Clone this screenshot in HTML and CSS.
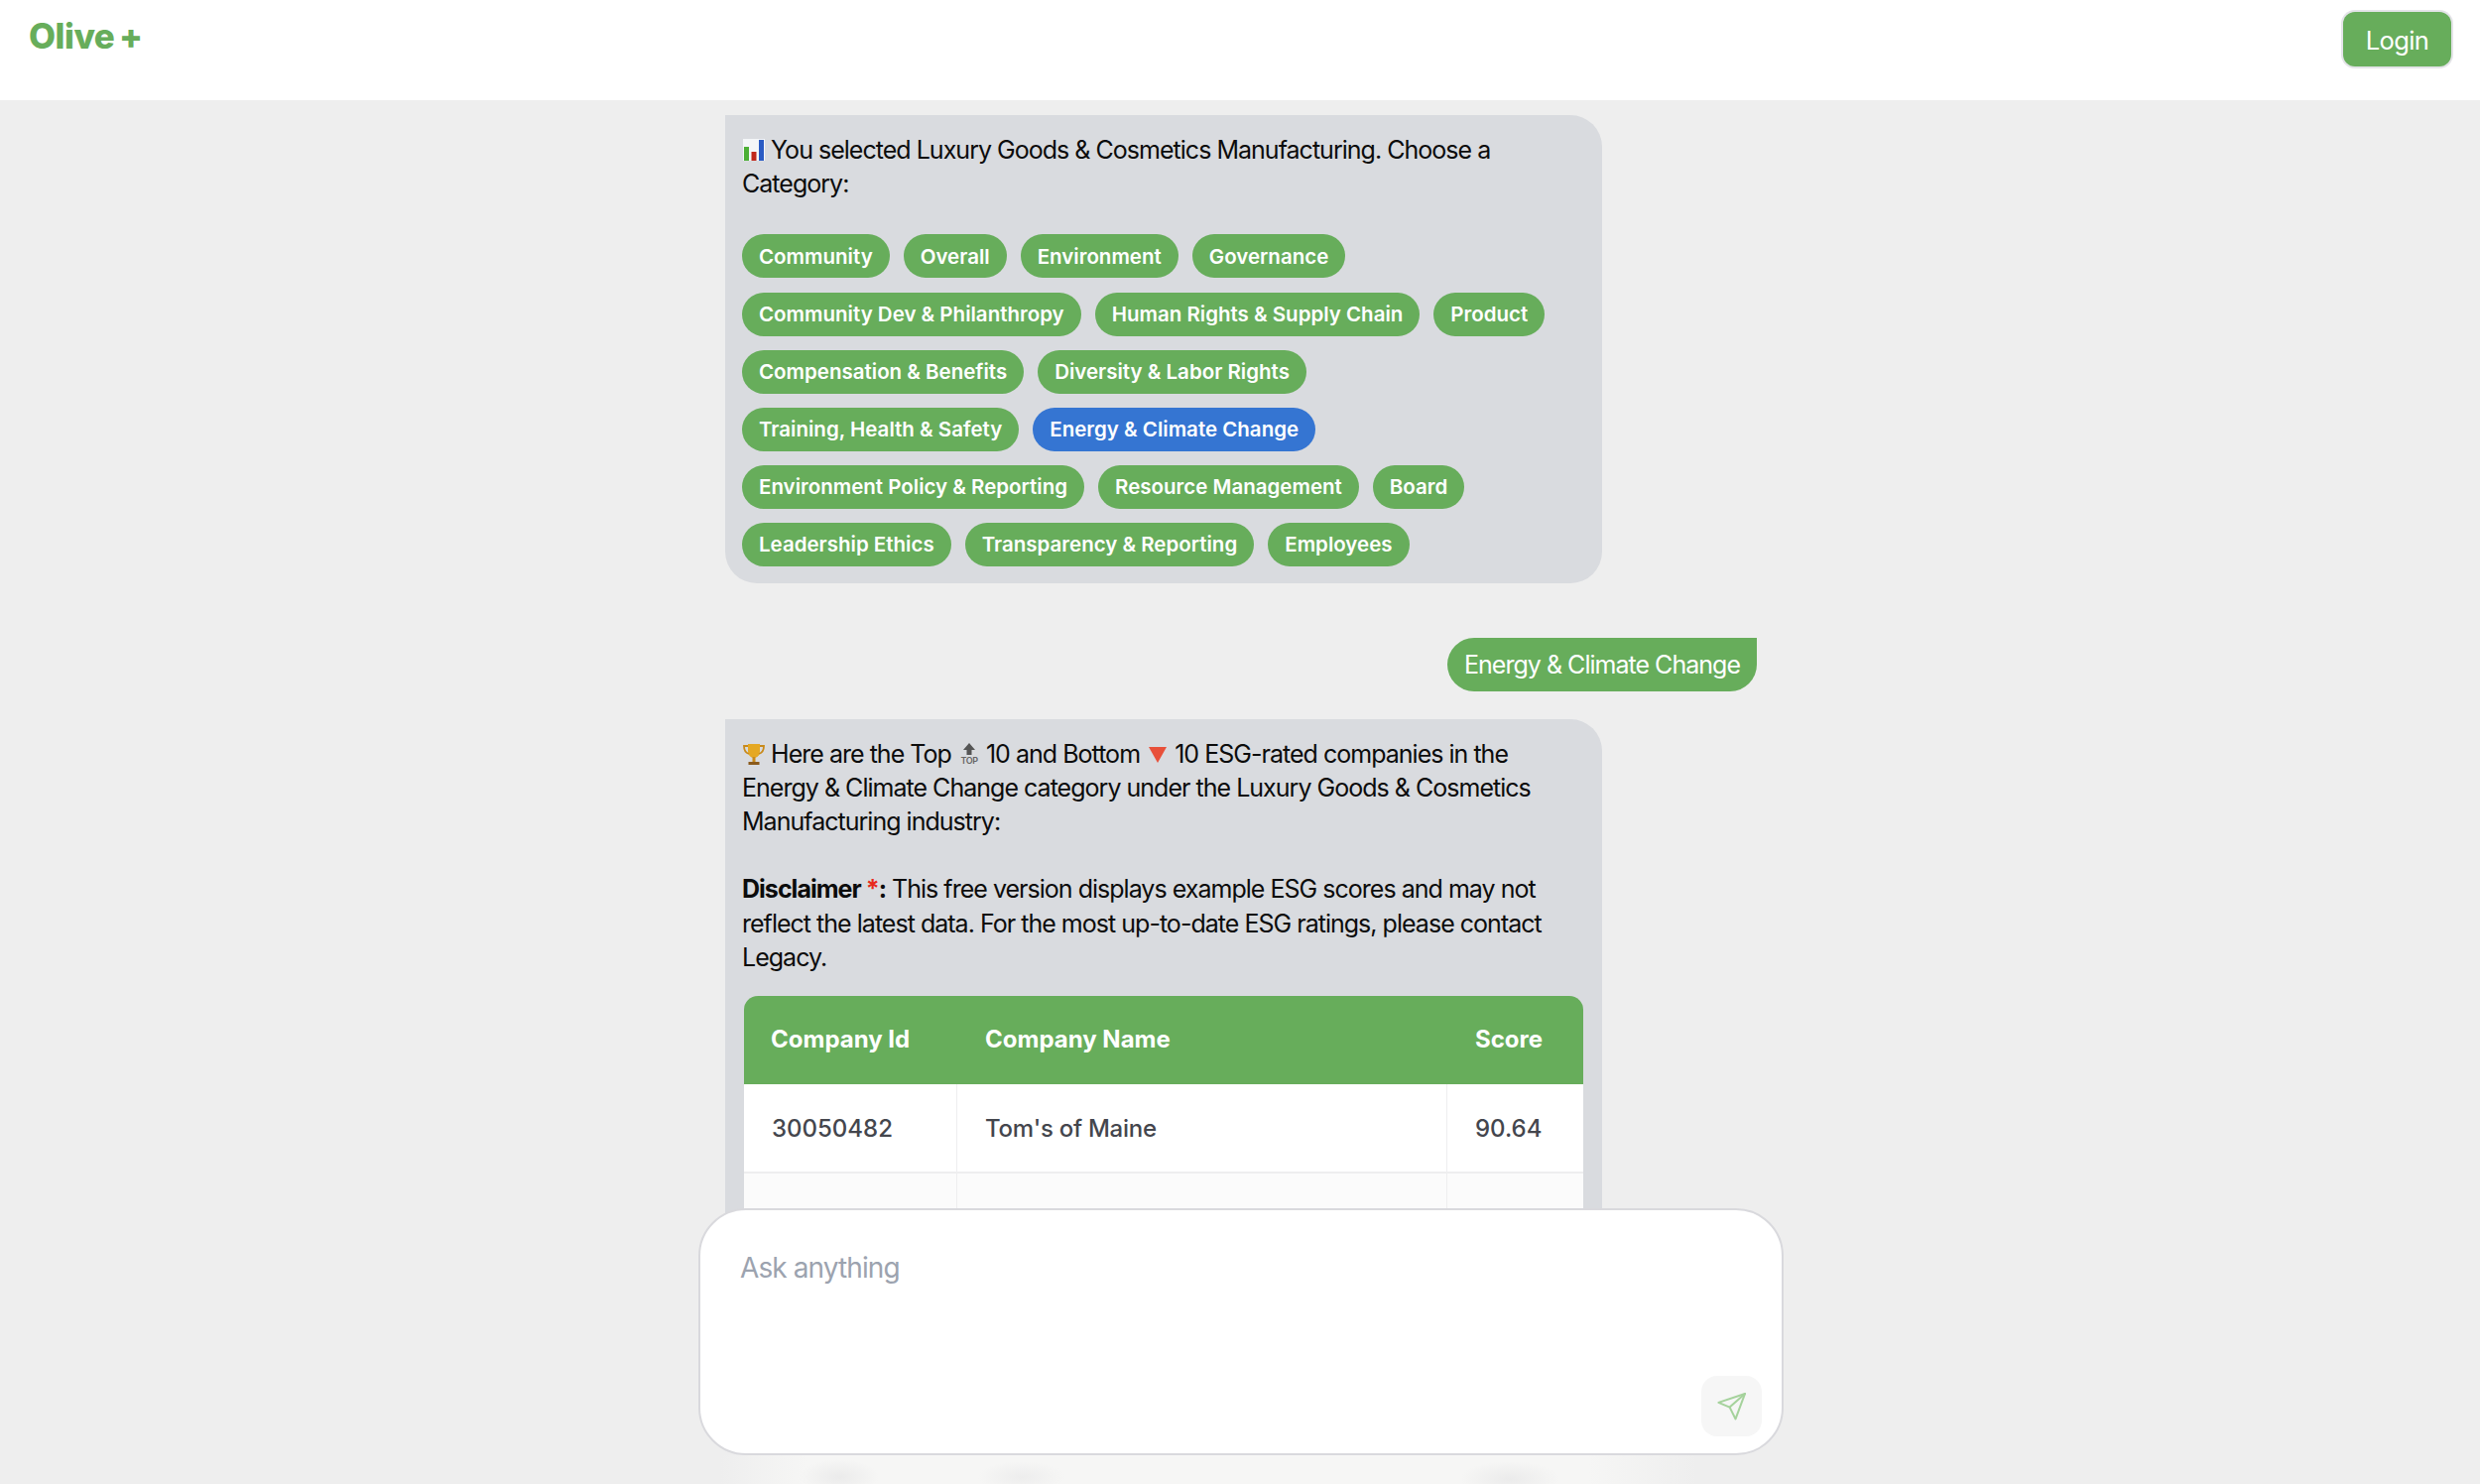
FILE: index.html
```html
<!DOCTYPE html>
<html lang="en">
<head>
  <meta charset="UTF-8">
  <title>Olive +</title>
  <link rel="stylesheet" href="styles.css">
</head>
<body>
  <!-- Top bar -->
  <header class="topbar">
    <div class="logo">Olive +</div>
    <button class="login-btn">Login</button>
  </header>

  <main class="chat-area">
    <div class="chat-column">
      <!-- Category picker -->
      <div class="bubble bot">
        <p class="bubble-text">
          <svg class="emoji" viewBox="0 0 24 24"><rect x="1" y="1" width="22" height="22" fill="#f4f6f8"/><rect x="2" y="9" width="5" height="14" fill="#4caf35"/><rect x="9.500" y="14" width="5" height="9" fill="#c0281c"/><rect x="17" y="2" width="5" height="21" fill="#2a5bc4"/></svg>
          You selected Luxury Goods &amp; Cosmetics Manufacturing. Choose a Category:
        </p>
        <div class="pills">
          <button class="pill">Community</button>
          <button class="pill">Overall</button>
          <button class="pill">Environment</button>
          <button class="pill">Governance</button>
          <button class="pill">Community Dev &amp; Philanthropy</button>
          <button class="pill">Human Rights &amp; Supply Chain</button>
          <button class="pill">Product</button>
          <button class="pill">Compensation &amp; Benefits</button>
          <button class="pill">Diversity &amp; Labor Rights</button>
          <button class="pill">Training, Health &amp; Safety</button>
          <button class="pill active">Energy &amp; Climate Change</button>
          <button class="pill">Environment Policy &amp; Reporting</button>
          <button class="pill">Resource Management</button>
          <button class="pill">Board</button>
          <button class="pill">Leadership Ethics</button>
          <button class="pill">Transparency &amp; Reporting</button>
          <button class="pill">Employees</button>
        </div>
      </div>

      <div class="bubble user">Energy &amp; Climate Change</div>

      <!-- Results -->
      <div class="bubble bot">
        <p class="bubble-text">
          <svg class="emoji" viewBox="0 0 24 24"><path d="M6 2h12v7c0 4-2.500 7-6 7s-6-3-6-7z" fill="#e5a823"/><path d="M6 4H2c0 5 2 7 5 8M18 4h4c0 5-2 7-5 8" fill="none" stroke="#c98a1a" stroke-width="1.800"/><rect x="10.500" y="15" width="3" height="5" fill="#c98a1a"/><rect x="6.500" y="20" width="11" height="3" fill="#8a5a1c"/></svg>
          Here are the Top
          <svg class="emoji" viewBox="0 0 24 24"><path d="M12 1l6 7h-3.500v5h-5V8H6z" fill="#555"/><text x="12" y="22" text-anchor="middle" class="emoji-top">TOP</text></svg>
          10 and Bottom
          <svg class="emoji" viewBox="0 0 24 24"><path d="M3 5h18L12 21z" fill="#e8503a"/></svg>
          10 ESG-rated companies in the Energy &amp; Climate Change category under the Luxury Goods &amp; Cosmetics Manufacturing industry:
        </p>
        <p class="bubble-text disclaimer">
          <strong>Disclaimer <span class="star">*</span>:</strong> This free version displays example ESG scores and may not reflect the latest data. For the most up-to-date ESG ratings, please contact Legacy.
        </p>
        <table class="score-table">
          <thead>
            <tr><th class="col-id">Company Id</th><th>Company Name</th><th class="col-score">Score</th></tr>
          </thead>
          <tbody>
            <tr><td>30050482</td><td class="name-cell">Tom's of Maine</td><td>90.64</td></tr>
            <tr class="alt"><td></td><td></td><td></td></tr>
          </tbody>
        </table>
      </div>
    </div>

    <!-- Composer floats over the chat -->
    <div class="composer-wrap">
      <div class="composer">
        <div class="placeholder">Ask anything</div>
        <button class="send-btn">
          <svg viewBox="-1.500 -1.500 27 27" width="32" height="32" fill="none" stroke="#a5d29c" stroke-width="1.700" stroke-linejoin="round" stroke-linecap="round"><path d="M23 1 .5 8.500 10 12.500 15 22.500z"/><path d="M23 1 10 12.500"/></svg>
        </button>
      </div>
      <div class="composer-fade"></div>
    </div>
  </main>
</body>
</html>
```

FILE: styles.css
```css
* {
  box-sizing: border-box;
}

html, body {
  margin: 0;
  height: 100%;
}

body {
  display: flex;
  flex-direction: column;
  overflow: hidden;
  background: #eeeeee;
  font-family: "Inter", "Noto Sans", sans-serif;
  color: #0c0c0c;
}

button {
  font-family: inherit;
  border: none;
}

.topbar {
  height: 101px;
  flex: none;
  display: flex;
  justify-content: space-between;
  align-items: flex-start;
  padding: 12px 29px;
  background: #fff;
}

.logo {
  font-size: 35px;
  font-weight: 800;
  line-height: 48px;
  letter-spacing: -0.5px;
  word-spacing: -2.5px;
  color: #67ad5b;
}

.login-btn {
  width: 109px;
  height: 55px;
  padding-top: 3px;
  background: #67ad5b;
  color: #fff;
  font-size: 25.5px;
  letter-spacing: -0.6px;
  border-radius: 12px;
  box-shadow: 0 0 0 2px #e4e4e8;
}

.chat-area {
  flex: 1;
  position: relative;
  overflow: hidden;
}

.chat-column {
  width: 1040px;
  margin-left: 731px;
  padding-top: 15px;
  display: flex;
  flex-direction: column;
  align-items: flex-start;
}

.bubble {
  font-size: 25px;
  line-height: 34.2px;
  letter-spacing: -0.98px;
}

.bot {
  width: 884px;
  padding: 18px 17px 17px;
  background: #d9dbdf;
  border-radius: 0 32px 32px 32px;
}

.user {
  align-self: flex-end;
  margin: 55px 0 28px;
  padding: 10px 17px;
  height: 54px;
  background: #67ad5b;
  color: #fff;
  border-radius: 32px 0 32px 32px;
}

.bubble-text {
  margin: 0;
}

.disclaimer {
  margin-top: 34px;
}

.star {
  color: #e8291c;
}

.emoji {
  width: 24px;
  height: 24px;
  margin-right: -1px;
  vertical-align: -3px;
}

.emoji-top {
  font-size: 9px;
  font-weight: 600;
  letter-spacing: -0.4px;
  fill: #666;
}

.pills {
  display: flex;
  flex-wrap: wrap;
  gap: 14.1px 14px;
  margin-top: 34px;
}

.pill {
  height: 44px;
  padding: 0 17px;
  background: #67ad5b;
  color: #fff;
  font-size: 20.5px;
  font-weight: 600;
  letter-spacing: 0;
  border-radius: 22px;
}

.pill.active {
  background: #3575d2;
}

.score-table {
  width: 846px;
  margin: 22px 0 0 2px;
  border-collapse: separate;
  border-spacing: 0;
  table-layout: fixed;
  letter-spacing: 0;
  font-size: 24px;
}

.score-table th {
  height: 89px;
  padding: 0 27px 0 28px;
  text-align: left;
  font-weight: 700;
  color: #fff;
  background: #67ad5b;
}

.score-table th:first-child {
  padding-left: 27px;
  border-top-left-radius: 14px;
}

.score-table th:last-child {
  border-top-right-radius: 14px;
}

.col-id {
  width: 215px;
}

.col-score {
  width: 137px;
}

.score-table td {
  height: 90px;
  padding: 3px 27px 0 28px;
  background: #fff;
  color: #44464d;
  font-weight: 500;
  border-bottom: 2px solid #eeeeef;
  border-right: 1px solid #eeeeef;
}

.score-table .name-cell {
  letter-spacing: -0.25px;
}

.score-table td:last-child {
  border-right: none;
}

.score-table .alt td {
  background: #fbfbfb;
}

.composer-wrap {
  position: absolute;
  left: 704px;
  bottom: 0;
  width: 1094px;
}

.composer {
  position: relative;
  height: 249px;
  padding: 38px 40px;
  background: #fff;
  border: 2px solid #d9d9dd;
  border-radius: 48px;
}

.placeholder {
  font-size: 28px;
  line-height: 40px;
  letter-spacing: -0.9px;
  color: #9ca3af;
}

.send-btn {
  position: absolute;
  right: 20px;
  bottom: 17px;
  width: 61px;
  height: 61px;
  padding: 0;
  display: flex;
  align-items: center;
  justify-content: center;
  background: #f6f6f6;
  border-radius: 16px;
}

.composer-fade {
  height: 29px;
  background:
    radial-gradient(ellipse 40px 18px at 142px 22px, #ebebeb, transparent),
    radial-gradient(ellipse 44px 16px at 326px 22px, #ededed, transparent),
    radial-gradient(ellipse 50px 18px at 818px 24px, #ebebeb, transparent),
    linear-gradient(90deg, #eeeeee 2%, #f6f6f5 10%, #f6f6f5 82%, #eeeeee 92%);
}
```
